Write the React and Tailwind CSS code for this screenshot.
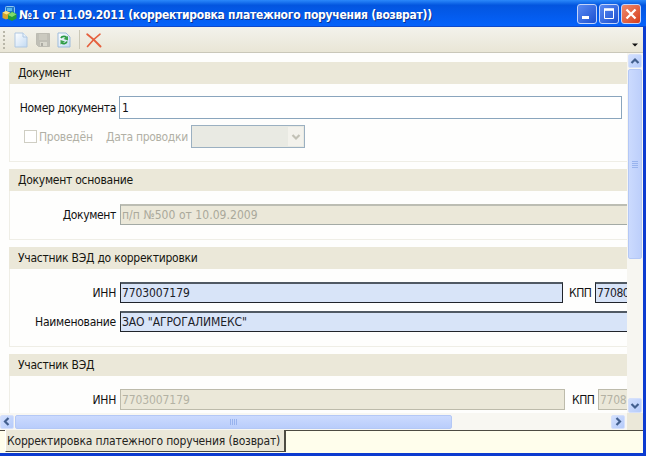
import React from "react";

function Section({ title, height, tracking = "tracking-[-0.25px]", children }) {
  return (
    <section className={`ml-[9px] shrink-0 border-b border-l border-[#efeee6] ${height}`}>
      <h2 className="-ml-px flex h-[22px] items-center bg-[#ebe8d9] pl-[9px] text-[#16160f]">
        <span className={tracking}>{title}</span>
      </h2>
      {children}
    </section>
  );
}

function Label({ children, className = "" }) {
  return <span className={`w-[106px] shrink-0 text-right text-[#111] ${className}`}>{children}</span>;
}

function Field({ children, tone, width, tracking = "tracking-[-0.1px]" }) {
  const tones = {
    blue: "border-t-2 border-[#20242b] border-t-[#505963] bg-[#d8e4f8] text-[#1b2028]",
    gray: "border-[#bdbbab] bg-[#ebe8d9] text-[#b3b2a4]",
    steel: "border-t-2 border-[#a3aaa5] border-t-[#bcbdb3] bg-[#ebe8d9] text-[#aaa99b]",
  };
  return (
    <span className={`flex h-[21px] shrink-0 items-center border pl-px ${tones[tone]} ${width}`}>
      <span className={tracking}>{children}</span>
    </span>
  );
}

function Chevron({ dir, color = "#43608f" }) {
  const d = { up: "M1.5 6 5 2.5 8.5 6", down: "M1.5 3 5 6.5 8.5 3", left: "M6.5 1 3 4.5 6.5 8", right: "M3.5 1 7 4.5 3.5 8" }[dir];
  return (
    <svg width="10" height="9" viewBox="0 0 10 9" fill="none" stroke={color} strokeWidth="2.2">
      <path d={d} />
    </svg>
  );
}

function ScrollButton({ dir, size }) {
  return (
    <span className={`flex shrink-0 items-center justify-center rounded-[2px] border border-[#d5e0fb] bg-linear-to-br from-[#d3e0fe] to-[#b5cbfa] ${size}`}>
      <Chevron dir={dir} />
    </span>
  );
}

function AppIcon() {
  return (
    <svg width="15" height="15" viewBox="0 0 15 15" className="shrink-0">
      <rect x="3.500" y="0.500" width="9" height="7" rx="1" fill="#2377c8" stroke="#8cc4ee" />
      <rect x="5" y="2" width="5" height="3" fill="#53b7ef" />
      <path d="M0.500 6.500 4 5l4 1.500V12l-4 1.500L0.500 12Z" fill="#d8a52c" />
      <path d="M0.500 6.500 4 5l4 1.500L4.500 8.500Z" fill="#f8e48a" />
      <path d="M6 9 10 5.500 14.500 8v4.500L10 15 6 13Z" fill="#219d38" />
      <path d="M6 9 10 6l4.500 2.200L10 11Z" fill="#7fdc6c" />
    </svg>
  );
}

function Page({ children, stroke = "#b0c8e2" }) {
  return (
    <svg width="14" height="16" viewBox="0 0 14 16" className="shrink-0">
      <defs>
        <linearGradient id="paper" x1="0" y1="0" x2="1" y2="1">
          <stop offset="0" stopColor="#fff" />
          <stop offset="1" stopColor="#c2daf3" />
        </linearGradient>
      </defs>
      <path d="M1 1h8l4 4v10H1Z" fill="url(#paper)" stroke={stroke} />
      {children || <path d="M9 1v4h4" fill="#e9f3fc" stroke={stroke} />}
    </svg>
  );
}

function Toolbar() {
  return (
    <div className="flex h-[26px] shrink-0 items-center border-b border-[#c9c7b9] bg-linear-to-b from-[#f3f2ec] to-[#e9e6d6]">
      <span className="ml-[3px] flex w-[2px] flex-col gap-[2px]">
        {[0, 1, 2, 3, 4].map((i) => (
          <i key={i} className="size-[2px] bg-[#b9b7a9]" />
        ))}
      </span>
      <span className="ml-[9px] flex"><Page /></span>
      <svg width="14" height="14" viewBox="0 0 14 14" className="ml-[8px]">
        <path d="M0.5 0.5h13v13h-11l-2-2Z" fill="#c0bfb6" stroke="#bdbcb3" />
        <path d="M3 1h8v6H3Z" fill="#cbcac0" />
        <path d="M4 9h7v4H4Z" fill="#d9d8ce" />
        <path d="M5 10h2v3H5Z" fill="#acaba3" />
      </svg>
      <span className="ml-[7px] flex">
        <Page stroke="#9dbbdc">
          <path d="M4 6C5 4 9 3.800 9.500 6M10 9.500C9 12 6 12 4.500 11" fill="none" stroke="#2b9a43" strokeWidth="1.800" />
          <path d="M11 4v4.500L6.500 7ZM3.500 12.500V8L8 9.500Z" fill="#3aa24c" />
        </Page>
      </span>
      <span className="ml-[8px] h-[19px] w-px bg-[#cbc8b7]" />
      <svg width="16" height="15" viewBox="0 0 16 15" className="mt-px ml-[6px]" fill="none" stroke="#e5603e" strokeLinecap="round">
        <path d="M1.2 1.2C5 4 10 8.500 14.500 13.500" strokeWidth="1.9" />
        <path d="M14 1.200C9 5 5 9 1.500 13.500" strokeWidth="1.6" />
      </svg>
      <svg width="6" height="4" viewBox="0 0 6 4" className="mr-[5px] ml-auto mt-[11px]">
        <path d="M0 0.500h6l-3 3Z" fill="#111" />
      </svg>
    </div>
  );
}

function WindowButton({ children, tone }) {
  return (
    <span className={`flex size-[20px] items-center justify-center rounded-[3px] border border-[#c3d4fa] ${tone}`}>
      <svg width="18" height="18" viewBox="0 0 18 18" fill="none" stroke="#fff">{children}</svg>
    </span>
  );
}

function TitleBar() {
  return (
    <header className="flex h-[27px] shrink-0 items-center border-b border-[#0f49ca] bg-linear-to-b from-[#2b88fa] from-0% via-[#0355df] via-20% to-[#0562fb] pr-[5px] pl-[2px]">
      <AppIcon />
      <h1 className="ml-[2px] pt-[3px] font-['DejaVu_Sans_Condensed','DejaVu_Sans',sans-serif] text-[12px] font-bold tracking-[-0.27px] whitespace-pre text-white [text-shadow:1px_1px_0_#0a3390]">
        №1 от 11.09.2011 (корректировка платежного поручения (возврат))
      </h1>
      <div className="ml-auto flex gap-[2px] pt-px">
        <WindowButton tone="bg-linear-to-br from-[#5a8af2] to-[#1d4fd0]">
          <path d="M4 12.500h7" strokeWidth="3" />
        </WindowButton>
        <WindowButton tone="bg-linear-to-br from-[#5a8af2] to-[#1d4fd0]">
          <path d="M4.500 5v8.500h9V5" />
          <path d="M4 4.500h10" strokeWidth="2.600" />
        </WindowButton>
        <WindowButton tone="bg-linear-to-br from-[#ee896c] to-[#d63b16]">
          <path d="m4.500 4.500 9 9m0-9-9 9" strokeWidth="2.300" />
        </WindowButton>
      </div>
    </header>
  );
}

function Form() {
  return (
    <main className="flex h-[360px] w-[627px] shrink-0 flex-col gap-[7px] overflow-hidden bg-[#fefefd] pt-[9px]">
      <Section title="Документ" height="h-[100px]" tracking="tracking-[-0.35px]">
        <div className="mt-[12px] flex items-center gap-[3px]">
          <Label className="tracking-[-0.36px]">Номер документа</Label>
          <span className="flex h-[23px] w-[503px] shrink-0 items-center border border-[#8aa5bd] bg-white pl-[2px] text-[#111]">1</span>
        </div>
        <div className="mt-[6px] flex h-[23px] items-center text-[#b1b0a5]">
          <span className="ml-[14px] size-[13px] shrink-0 border border-[#cfcec3] bg-white" />
          <span className="ml-[2px] w-[67px] tracking-[-0.25px]">Проведён</span>
          <span className="w-[85px] tracking-[-0.3px] whitespace-nowrap">Дата проводки</span>
          <span className="flex h-[23px] w-[114px] items-center justify-end border border-[#9bb0c1] bg-[#e9eae3] pr-px">
            <span className="flex h-[19px] w-[15px] items-center justify-center bg-[#f3f2ec]">
              <Chevron dir="down" color="#c2c1b6" />
            </span>
          </span>
        </div>
      </Section>
      <Section title="Документ основание" height="h-[71px]">
        <div className="mt-[13px] flex items-center gap-[4px]">
          <Label className="tracking-[-0.35px]">Документ</Label>
          <Field tone="steel" width="w-[520px]" tracking="tracking-[0.05px]">п/п №500 от 10.09.2009</Field>
        </div>
      </Section>
      <Section title="Участник ВЭД до корректировки" height="h-[100px]">
        <div className="mt-[13px] flex items-center">
          <Label className="mr-[4px] tracking-[-0.3px]">ИНН</Label>
          <Field tone="blue" width="w-[443px]">7703007179</Field>
          <span className="mx-[4px] w-[24px] shrink-0 pl-[2px] tracking-[-0.5px] text-[#111]">КПП</span>
          <Field tone="blue" width="w-[100px]" tracking="tracking-[-0.4px]">77080</Field>
        </div>
        <div className="mt-[8px] flex items-center gap-[4px]">
          <Label className="tracking-[-0.25px]">Наименование</Label>
          <Field tone="blue" width="w-[520px]">ЗАО "АГРОГАЛИМЕКС"</Field>
        </div>
      </Section>
      <Section title="Участник ВЭД" height="h-[100px]">
        <div className="mt-[13px] flex items-center">
          <Label className="mr-[4px] tracking-[-0.3px]">ИНН</Label>
          <Field tone="gray" width="w-[445px]">7703007179</Field>
          <span className="mx-[4px] w-[25px] shrink-0 pl-[3px] tracking-[-0.5px] text-[#111]">КПП</span>
          <Field tone="gray" width="w-[100px]" tracking="tracking-[-0.3px]">7708</Field>
        </div>
      </Section>
    </main>
  );
}

export default function App() {
  return (
    <div className="flex h-[456px] w-[646px] flex-col overflow-hidden bg-[#fefefd] font-['DejaVu_Sans_Condensed','DejaVu_Sans',sans-serif] text-[12px] leading-[14px] whitespace-nowrap">
      <TitleBar />
      <div className="flex h-[429px] border-r-[3px] border-b-[3px] border-[#0c3bd0]">
        <div className="flex w-[643px] flex-col">
          <Toolbar />
          <div className="flex h-[360px]">
            <Form />
            <aside className="flex w-[16px] flex-col items-center bg-[#f7f6f1] pt-px">
              <ScrollButton dir="up" size="h-[14px] w-[14px]" />
              <span className="mt-px flex h-[190px] w-[14px] flex-col items-center justify-center gap-px rounded-[2px] border border-[#b4c8f6] bg-linear-to-r from-[#cbdafe] to-[#bdcffb]">
                {[0, 1, 2, 3].map((i) => <i key={i} className="h-px w-[6px] bg-[#98b3ee]" />)}
              </span>
              <span className="mt-auto"><ScrollButton dir="down" size="h-[15px] w-[14px]" /></span>
            </aside>
          </div>
          <div className="flex h-[17px] shrink-0 items-center bg-[#f8f7f2]">
            <ScrollButton dir="left" size="h-[14px] w-[14px]" />
            <span className="ml-px flex h-[14px] w-[437px] items-center justify-center gap-px rounded-[2px] border border-[#b4c8f6] bg-linear-to-b from-[#cbdafe] to-[#b9cdfb]">
              {[0, 1, 2, 3].map((i) => <i key={i} className="h-[6px] w-px bg-[#98b3ee]" />)}
            </span>
            <span className="mr-[2px] ml-auto"><ScrollButton dir="right" size="h-[14px] w-[14px]" /></span>
            <span className="h-full w-[16px] bg-[#ebe8d9]" />
          </div>
          <footer className="flex grow bg-[#fffeec]">
            <span className="w-[5px] border-t border-[#4d4b42]" />
            <span className="flex h-[22px] w-[281px] items-center border-r-2 border-b border-l border-[#4d4b42] border-l-[#fff] bg-[#ebe8d9] pl-px tracking-[-0.17px] text-[#25241d]">Корректировка платежного поручения (возврат)</span>
            <span className="grow border-t border-[#4d4b42]" />
          </footer>
        </div>
      </div>
    </div>
  );
}
